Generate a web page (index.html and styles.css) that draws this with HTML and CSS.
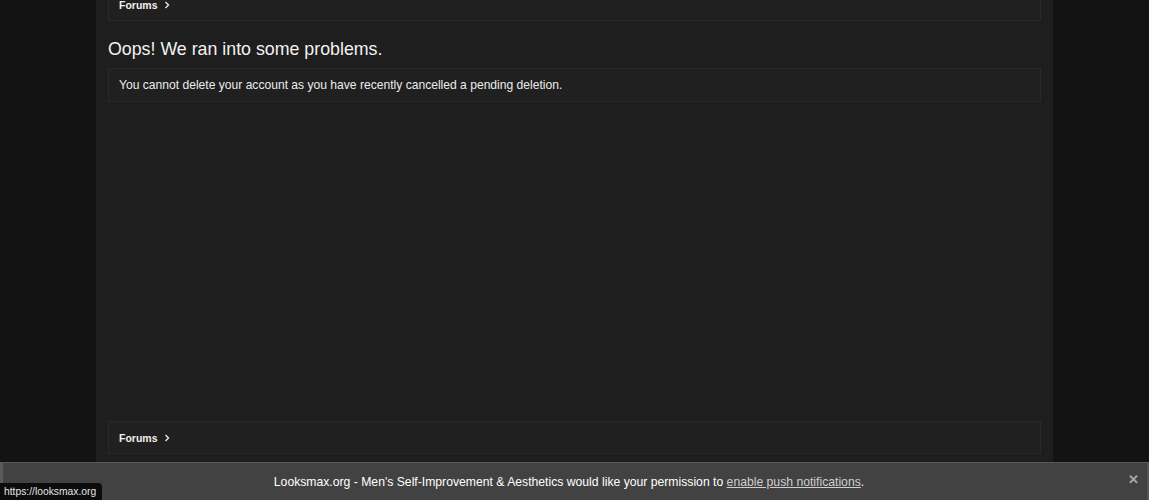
FILE: index.html
```html
<!DOCTYPE html>
<html lang="en">
<head>
<meta charset="utf-8">
<title>Oops! We ran into some problems.</title>
<link rel="stylesheet" href="styles.css">
</head>
<body>
<div class="page">
  <div class="crumbs crumbs-top">
    <span class="crumb">Forums</span>
    <svg class="chev" width="6" height="8" viewBox="0 0 6 8"><path d="M1.5 1 L4.5 4 L1.5 7" fill="none" stroke="#e6e6e6" stroke-width="1.4"/></svg>
  </div>
  <h1 class="title">Oops! We ran into some problems.</h1>
  <div class="block">You cannot delete your account as you have recently cancelled a pending deletion.</div>
  <div class="spacer"></div>
  <div class="crumbs">
    <span class="crumb">Forums</span>
    <svg class="chev" width="6" height="8" viewBox="0 0 6 8"><path d="M1.5 1 L4.5 4 L1.5 7" fill="none" stroke="#e6e6e6" stroke-width="1.4"/></svg>
  </div>
</div>
<div class="notice">
  <span class="notice-text">Looksmax.org - Men's Self-Improvement &amp; Aesthetics would like your permission to <a class="notice-link" href="#">enable push notifications</a>.</span>
  <span class="notice-close">&#x2715;</span>
</div>
<div class="status">https://looksmax.org</div>
</body>
</html>
```
FILE: styles.css
```css
html, body {
  margin: 0;
  padding: 0;
}
body {
  background: #131313;
  font-family: "Liberation Sans", Arial, sans-serif;
  color: #e8e8e8;
  height: 500px;
  overflow: hidden;
}
.page {
  width: 933px;
  margin: 0 auto;
  padding: 0 12px 10px;
  background: #1e1e1e;
  display: flex;
  flex-direction: column;
}
.crumbs {
  display: flex;
  align-items: center;
  gap: 6px;
  height: 31px;
  padding: 0 10px;
  border: 1px solid #292929;
  background: #202020;
}
.crumbs-top {
  margin-top: -12px;
}
.crumb {
  font-size: 10.5px;
  font-weight: bold;
  color: #f0f0f0;
}
.chev {
  display: block;
  margin-top: 1px;
}
.title {
  margin: 16px 0 7px;
  font-size: 17.8px;
  line-height: 24px;
  font-weight: normal;
  color: #f2f2f2;
}
.block {
  padding: 8px 10px;
  font-size: 12.1px;
  line-height: 16px;
  border: 1px solid #292929;
  background: #202020;
  color: #ececec;
}
.spacer {
  height: 319px;
}
.notice {
  position: fixed;
  left: 0;
  right: 0;
  bottom: 0;
  height: 37px;
  padding-right: 12px;
  background: #424242;
  border-top: 1px solid #585858;
  border-left: 3px solid #5a5a5a;
  border-right: 2px solid #555555;
  display: flex;
  align-items: center;
  justify-content: center;
  font-size: 12.2px;
  color: #ffffff;
}
.notice-text {
  margin-top: 1px;
}
.notice-link {
  color: #cfcfcf;
  text-decoration: underline;
}
.notice-close {
  position: absolute;
  right: 8px;
  top: 9px;
  font-size: 13px;
  font-weight: bold;
  color: #a8a8a8;
}
.status {
  position: fixed;
  left: 0;
  bottom: 0;
  height: 17px;
  line-height: 17px;
  padding: 0 6px 0 4px;
  background: #0c0c0c;
  color: #e4e4e4;
  font-size: 10.3px;
  border-top-right-radius: 4px;
}
```
